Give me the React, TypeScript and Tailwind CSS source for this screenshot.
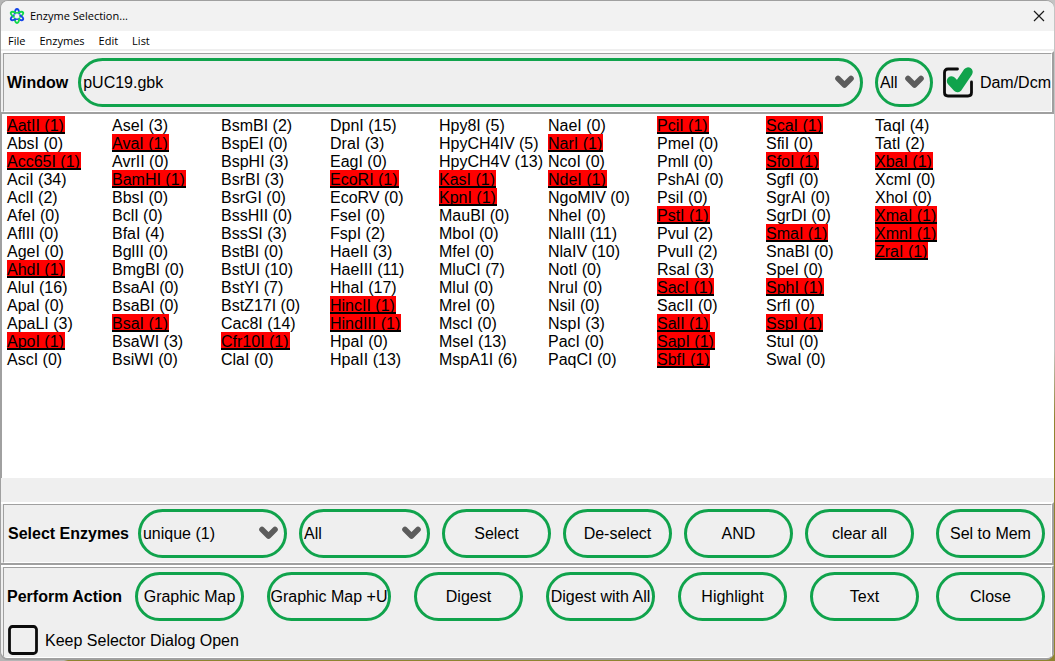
import React, { useState } from "react";

const COLUMNS: string[][] = [
  ["*AatII (1)", "AbsI (0)", "*Acc65I (1)", "AciI (34)", "AclI (2)", "AfeI (0)", "AflII (0)", "AgeI (0)", "*AhdI (1)", "AluI (16)", "ApaI (0)", "ApaLI (3)", "*ApoI (1)", "AscI (0)"],
  ["AseI (3)", "*AvaI (1)", "AvrII (0)", "*BamHI (1)", "BbsI (0)", "BclI (0)", "BfaI (4)", "BglII (0)", "BmgBI (0)", "BsaAI (0)", "BsaBI (0)", "*BsaI (1)", "BsaWI (3)", "BsiWI (0)"],
  ["BsmBI (2)", "BspEI (0)", "BspHI (3)", "BsrBI (3)", "BsrGI (0)", "BssHII (0)", "BssSI (3)", "BstBI (0)", "BstUI (10)", "BstYI (7)", "BstZ17I (0)", "Cac8I (14)", "*Cfr10I (1)", "ClaI (0)"],
  ["DpnI (15)", "DraI (3)", "EagI (0)", "*EcoRI (1)", "EcoRV (0)", "FseI (0)", "FspI (2)", "HaeII (3)", "HaeIII (11)", "HhaI (17)", "*HincII (1)", "*HindIII (1)", "HpaI (0)", "HpaII (13)"],
  ["Hpy8I (5)", "HpyCH4IV (5)", "HpyCH4V (13)", "*KasI (1)", "*KpnI (1)", "MauBI (0)", "MboI (0)", "MfeI (0)", "MluCI (7)", "MluI (0)", "MreI (0)", "MscI (0)", "MseI (13)", "MspA1I (6)"],
  ["NaeI (0)", "*NarI (1)", "NcoI (0)", "*NdeI (1)", "NgoMIV (0)", "NheI (0)", "NlaIII (11)", "NlaIV (10)", "NotI (0)", "NruI (0)", "NsiI (0)", "NspI (3)", "PacI (0)", "PaqCI (0)"],
  ["*PciI (1)", "PmeI (0)", "PmlI (0)", "PshAI (0)", "PsiI (0)", "*PstI (1)", "PvuI (2)", "PvuII (2)", "RsaI (3)", "*SacI (1)", "SacII (0)", "*SalI (1)", "*SapI (1)", "*SbfI (1)"],
  ["*ScaI (1)", "SfiI (0)", "*SfoI (1)", "SgfI (0)", "SgrAI (0)", "SgrDI (0)", "*SmaI (1)", "SnaBI (0)", "SpeI (0)", "*SphI (1)", "SrfI (0)", "*SspI (1)", "StuI (0)", "SwaI (0)"],
  ["TaqI (4)", "TatI (2)", "*XbaI (1)", "XcmI (0)", "XhoI (0)", "*XmaI (1)", "*XmnI (1)", "*ZraI (1)"],
];

const PETALS = [0, 60, 120, 180, 240, 300];

function Logo() {
  return (
    <svg className="size-4" viewBox="0 0 16 16" fill="none" strokeWidth="1.9" strokeLinecap="round" aria-hidden="true">
      {PETALS.map((angle, i) => (
        <path
          key={angle}
          d="M5.700 5.600C6 2.600 6.700 1 8 1S10 2.600 10.300 5.600"
          stroke={i % 2 ? "#12d84a" : "#1747e8"}
          transform={`rotate(${angle} 8 8)`}
        />
      ))}
    </svg>
  );
}

function PillSelect({ label, options, className }: { label: string; options: string[]; className: string }) {
  return (
    <div className={`relative h-[49px] ${className}`}>
      <select
        aria-label={label}
        className="size-full appearance-none rounded-full border-3 border-[#10a34c] bg-[#efefef] pl-0.5 text-base text-black outline-none"
      >
        {options.map((o) => (
          <option key={o}>{o}</option>
        ))}
      </select>
      <svg className="pointer-events-none absolute top-4 right-2 h-4 w-5" viewBox="0 0 20 16" fill="none" aria-hidden="true">
        <path d="M3 4.500L9.500 11L16 4.500" stroke="#5c5c5c" strokeWidth="5.600" strokeLinecap="round" strokeLinejoin="round" />
      </svg>
    </div>
  );
}

function PillButton({ children, className = "w-[109px]" }: { children: React.ReactNode; className?: string }) {
  return (
    <button type="button" className={`h-[49px] shrink-0 rounded-full border-3 border-[#10a34c] whitespace-nowrap ${className}`}>
      <span className="flex items-center justify-center">{children}</span>
    </button>
  );
}

function CheckField({ label, defaultChecked, className }: { label: string; defaultChecked?: boolean; className: string }) {
  const [checked, setChecked] = useState(!!defaultChecked);
  return (
    <label className={`flex shrink-0 items-center gap-[7px] ${className}`}>
      <input type="checkbox" className="peer sr-only" checked={checked} onChange={(e) => setChecked(e.target.checked)} />
      <svg className="h-8 w-[30px]" viewBox="0 0 30 32" fill="none" aria-hidden="true">
        {checked ? (
          <>
            <path d="M14.500 2H5Q1.500 2 1.500 5.500V25.500Q1.500 29 5 29H25Q28.500 29 28.500 25.500V15" stroke="#0b0b0b" strokeWidth="2.800" strokeLinecap="round" />
            <path d="M8.500 14L14.500 20.500L25 5" stroke="#10a34c" strokeWidth="9.400" strokeLinecap="round" strokeLinejoin="round" />
          </>
        ) : (
          <rect x="1.500" y="1.500" width="27" height="27" rx="3" stroke="#0b0b0b" strokeWidth="2.800" />
        )}
      </svg>
      {label}
    </label>
  );
}

function Panel({ children, className = "border-b-2" }: { children: React.ReactNode; className?: string }) {
  return (
    <section className={`border-t-2 border-r-2 border-t-white border-r-[#a0a0a0] border-b-[#a0a0a0] pl-0.5 ${className}`}>
      <div className="border border-t-[#a0a0a0] border-r-white border-b-white border-l-[#a0a0a0]">{children}</div>
    </section>
  );
}

export default function App() {
  return (
    <div className="min-h-screen bg-[linear-gradient(to_right,#b5b5b5_64px,transparent_68px),linear-gradient(to_bottom,#c4c4c4_350px,#8f8430_420px)] pr-px pb-px font-['Liberation_Sans',Arial,sans-serif] text-base leading-[18px] text-black">
      <main className="flex min-h-[660px] flex-col overflow-hidden rounded-lg border border-r-0 border-b-2 border-[#a0a0a0] bg-[#efefef]">
        <header className="flex h-[30px] items-center bg-[#f2f2f2] px-2 font-['Open_Sans','Noto_Sans',sans-serif] text-[11px]">
          <Logo />
          <h1 className="ml-[5px]">Enzyme Selection...</h1>
          <button type="button" aria-label="Close window" className="mr-px ml-auto">
            <svg className="size-3" viewBox="0 0 12 12" aria-hidden="true">
              <path d="M1 1L11 11M11 1L1 11" stroke="#1a1a1a" strokeWidth="1.200" />
            </svg>
          </button>
        </header>
        <nav className="mb-0.5 flex h-[18px] items-center gap-3.5 bg-white pt-0.5 pl-[7px] font-['Open_Sans','Noto_Sans',sans-serif] text-[11px]">
          <button type="button">File</button>
          <button type="button">Enzymes</button>
          <button type="button">Edit</button>
          <button type="button">List</button>
        </nav>

        <Panel>
          <div className="flex items-start py-1 pl-[3px]">
            <b className="mr-2.5 flex h-[49px] items-center">Window</b>
            <PillSelect label="Window" options={["pUC19.gbk"]} className="mr-3 min-w-0 flex-1" />
            <PillSelect label="Cut filter" options={["All"]} className="mr-2.5 w-[58px]" />
            <CheckField label="Dam/Dcm" defaultChecked className="h-[49px]" />
          </div>
        </Panel>

        <div className="min-h-[364px] flex-1 border-l border-[#a0a0a0] bg-white pt-0.5 pl-[5px]">
          <div className="grid grid-cols-[105px_repeat(8,109px)]">
            {COLUMNS.map((col, i) => (
              <ul key={i}>
                {col.map((item) => {
                  const hit = item.startsWith("*");
                  return (
                    <li key={item} className="flex h-[18px] leading-4">
                      <button
                        type="button"
                        aria-pressed={hit}
                        className={
                          hit
                            ? "bg-[#ff0000] pt-0.5 pr-px whitespace-nowrap shadow-[inset_0_-2px_#000000]"
                            : "pt-0.5 whitespace-nowrap"
                        }
                      >
                        {hit ? item.slice(1) : item}
                      </button>
                    </li>
                  );
                })}
              </ul>
            ))}
          </div>
        </div>

        <Panel className="mt-6 border-b-2">
          <div className="flex items-center gap-3 py-1 pr-1.5 pl-1">
            <b className="-mr-[3px] whitespace-nowrap">Select Enzymes</b>
            <PillSelect label="Number of cuts" options={["unique (1)"]} className="w-[149px]" />
            <PillSelect label="Enzyme group" options={["All"]} className="w-[131px]" />
            <PillButton>Select</PillButton>
            <PillButton>De-select</PillButton>
            <PillButton>AND</PillButton>
            <PillButton>clear all</PillButton>
            <PillButton className="ml-auto w-[109px]">Sel to Mem</PillButton>
          </div>
        </Panel>

        <Panel className="border-b-0">
          <div className="flex items-center pt-1 pr-1.5 pl-[3px]">
            <b className="mr-[13px] whitespace-nowrap">Perform Action</b>
            <div className="flex flex-1 gap-[23px]">
              <PillButton>Graphic Map</PillButton>
              <PillButton className="w-[124px]">Graphic Map +U</PillButton>
              <PillButton>Digest</PillButton>
              <PillButton>Digest with All</PillButton>
              <PillButton>Highlight</PillButton>
              <PillButton>Text</PillButton>
            </div>
            <PillButton>Close</PillButton>
          </div>
          <div className="pt-1 pl-1">
            <CheckField label="Keep Selector Dialog Open" className="w-fit" />
          </div>
        </Panel>
      </main>
    </div>
  );
}
